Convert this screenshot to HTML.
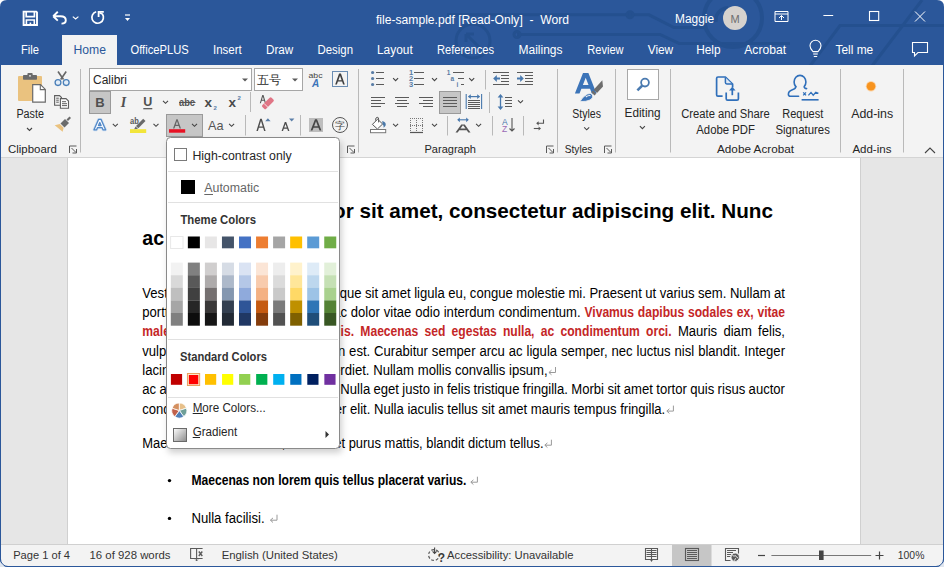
<!DOCTYPE html>
<html><head><meta charset="utf-8"><style>
html,body{margin:0;padding:0;width:944px;height:567px;overflow:hidden;background:#fff}
svg{display:block;font-family:"Liberation Sans", sans-serif}
</style></head><body>
<svg width="944" height="567" viewBox="0 0 944 567">
<rect x="0" y="0" width="944" height="567" fill="#ffffff" />
<path d="M0,7 Q0,0 7,0 L937,0 Q944,0 944,7 L944,66 L0,66 Z" fill="#2b579a" />
<g stroke="#24508f" stroke-width="3" fill="none">
<path d="M517,34.5 H660 L679,43.4 H790"/>
<path d="M447,14.8 H649 L674,27.5 H705"/>
<circle cx="630" cy="14.8" r="3"/>
<circle cx="517" cy="34.5" r="3"/>
<circle cx="473" cy="41" r="17"/>
<path d="M466,34 L480,48 M466,34 V42 M466,34 H474"/>
<circle cx="733" cy="18" r="29" stroke-width="4"/>
<path d="M716,22 A12,12 0 0 1 728,8" stroke-width="3.5"/>
<path d="M810,66 L840,25.5 L944,25.5"/>
<path d="M872,66 L922,0"/>
</g>
<text x="376" y="24" font-size="12" fill="#ffffff" textLength="193" lengthAdjust="spacingAndGlyphs" xml:space="preserve">file-sample.pdf [Read-Only]  -  Word</text>
<text x="675" y="23" font-size="12" fill="#ffffff" textLength="39" lengthAdjust="spacingAndGlyphs" >Maggie</text>
<circle cx="735" cy="18" r="12" fill="#d6d2ce"/>
<text x="735" y="22.5" font-size="11" fill="#6e6e6e" text-anchor="middle" >M</text>
<path d="M23.6,11.6 H36.2 L37,12.4 V25 H23.6 Z" fill="none" stroke="#ffffff" stroke-width="1.9" />
<path d="M26.2,11.6 V16.6 H34.4 V11.6" fill="none" stroke="#ffffff" stroke-width="1.7" />
<path d="M26.4,25 V20 H34.3 V25 M30.4,22.5 V25" fill="none" stroke="#ffffff" stroke-width="1.6" />
<path d="M53.2,16.2 L57.8,11.8 M53.2,16.2 L57.8,20.6 M53.2,16.2 H60.5 Q65.8,16.2 65.8,20.2 Q65.8,23.6 61.5,23.6" fill="none" stroke="#ffffff" stroke-width="1.9" />
<path d="M72.8,16.6 L75.6,19 L78.4,16.6" fill="none" stroke="#ffffff" stroke-width="1.2" />
<path d="M96.2,11.8 A5.8,5.8 0 1 0 102.4,14.1 L99.6,12.7" fill="none" stroke="#ffffff" stroke-width="1.7" />
<path d="M98.6,17 V11.8 H103.8" fill="none" stroke="#ffffff" stroke-width="1.8" />
<line x1="125" y1="15" x2="130" y2="15" stroke="#ffffff" stroke-width="1.2" />
<path d="M125,18 L130,18 L127.5,21 Z" fill="#ffffff" />
<path d="M775,11.5 H788 V21.5 H775 Z" fill="none" stroke="#ffffff" stroke-width="1" />
<line x1="775" y1="14" x2="788" y2="14" stroke="#ffffff" stroke-width="1" />
<path d="M781.5,20 V15.5 M779,18 L781.5,15.5 L784,18" fill="none" stroke="#ffffff" stroke-width="1" />
<line x1="823.4" y1="15.5" x2="833.2" y2="15.5" stroke="#ffffff" stroke-width="1" />
<rect x="869.5" y="11.5" width="9.2" height="9" fill="none" stroke="#ffffff" stroke-width="1.1" />
<path d="M915,11.5 L925,21.5 M925,11.5 L915,21.5" fill="none" stroke="#ffffff" stroke-width="1" />
<rect x="62" y="35" width="55" height="31" fill="#f3f3f3" />
<text x="21" y="54" font-size="12" fill="#ffffff" textLength="18" lengthAdjust="spacingAndGlyphs" >File</text>
<text x="73.5" y="54" font-size="12" fill="#2b579a" textLength="32.5" lengthAdjust="spacingAndGlyphs" >Home</text>
<text x="130.5" y="54" font-size="12" fill="#ffffff" textLength="58.3" lengthAdjust="spacingAndGlyphs" >OfficePLUS</text>
<text x="213" y="54" font-size="12" fill="#ffffff" textLength="28.7" lengthAdjust="spacingAndGlyphs" >Insert</text>
<text x="266" y="54" font-size="12" fill="#ffffff" textLength="27.2" lengthAdjust="spacingAndGlyphs" >Draw</text>
<text x="317.5" y="54" font-size="12" fill="#ffffff" textLength="35.5" lengthAdjust="spacingAndGlyphs" >Design</text>
<text x="377" y="54" font-size="12" fill="#ffffff" textLength="35.7" lengthAdjust="spacingAndGlyphs" >Layout</text>
<text x="437" y="54" font-size="12" fill="#ffffff" textLength="57" lengthAdjust="spacingAndGlyphs" >References</text>
<text x="518.5" y="54" font-size="12" fill="#ffffff" textLength="44" lengthAdjust="spacingAndGlyphs" >Mailings</text>
<text x="587.3" y="54" font-size="12" fill="#ffffff" textLength="36.3" lengthAdjust="spacingAndGlyphs" >Review</text>
<text x="647.7" y="54" font-size="12" fill="#ffffff" textLength="25.5" lengthAdjust="spacingAndGlyphs" >View</text>
<text x="696.2" y="54" font-size="12" fill="#ffffff" textLength="24.4" lengthAdjust="spacingAndGlyphs" >Help</text>
<text x="744.3" y="54" font-size="12" fill="#ffffff" textLength="41.7" lengthAdjust="spacingAndGlyphs" >Acrobat</text>
<text x="835.5" y="54" font-size="12" fill="#ffffff" textLength="37.7" lengthAdjust="spacingAndGlyphs" >Tell me</text>
<path d="M813,51.6 Q810,48.8 810,45.8 A5.5,5.5 0 0 1 821,45.8 Q821,48.8 818,51.6 Z" fill="none" stroke="#ffffff" stroke-width="1.1" />
<line x1="813.2" y1="54" x2="817.8" y2="54" stroke="#ffffff" stroke-width="1.1" />
<line x1="813.8" y1="56.5" x2="817.2" y2="56.5" stroke="#ffffff" stroke-width="1.1" />
<path d="M912.5,42.5 H927.5 V52.5 H918 L914.5,56 V52.5 H912.5 Z" fill="none" stroke="#ffffff" stroke-width="1.1" />
<rect x="0" y="65" width="944" height="92" fill="#f3f3f3" />
<line x1="0" y1="157.5" x2="944" y2="157.5" stroke="#d4d4d4" stroke-width="1" />
<line x1="0.5" y1="65" x2="0.5" y2="566" stroke="#2b579a" stroke-width="1" />
<line x1="943.5" y1="65" x2="943.5" y2="566" stroke="#2b579a" stroke-width="1" />
<text x="8" y="152.7" font-size="11" fill="#262626" textLength="49" lengthAdjust="spacingAndGlyphs" >Clipboard</text>
<text x="424.5" y="152.7" font-size="11" fill="#262626" textLength="51.5" lengthAdjust="spacingAndGlyphs" >Paragraph</text>
<text x="564.7" y="152.7" font-size="11" fill="#262626" textLength="27.7" lengthAdjust="spacingAndGlyphs" >Styles</text>
<text x="717" y="152.7" font-size="11" fill="#262626" textLength="77" lengthAdjust="spacingAndGlyphs" >Adobe Acrobat</text>
<text x="852.4" y="152.7" font-size="11" fill="#262626" textLength="39" lengthAdjust="spacingAndGlyphs" >Add-ins</text>
<line x1="80.5" y1="69" x2="80.5" y2="152.5" stroke="#b9b9b9" stroke-width="1" />
<line x1="358.5" y1="69" x2="358.5" y2="152.5" stroke="#b9b9b9" stroke-width="1" />
<line x1="557.5" y1="69" x2="557.5" y2="152.5" stroke="#b9b9b9" stroke-width="1" />
<line x1="615.5" y1="69" x2="615.5" y2="152.5" stroke="#b9b9b9" stroke-width="1" />
<line x1="670.5" y1="69" x2="670.5" y2="152.5" stroke="#b9b9b9" stroke-width="1" />
<line x1="840.5" y1="69" x2="840.5" y2="152.5" stroke="#b9b9b9" stroke-width="1" />
<line x1="903.5" y1="69" x2="903.5" y2="152.5" stroke="#b9b9b9" stroke-width="1" />
<path d="M69.5,153.0 V146.0 H76.5" fill="none" stroke="#5a5a5a" stroke-width="1" />
<path d="M71.5,148.0 L76,152.5 M76.5,149.0 V153.0 H72.5" fill="none" stroke="#5a5a5a" stroke-width="1" />
<path d="M347.5,153.0 V146.0 H354.5" fill="none" stroke="#5a5a5a" stroke-width="1" />
<path d="M349.5,148.0 L354,152.5 M354.5,149.0 V153.0 H350.5" fill="none" stroke="#5a5a5a" stroke-width="1" />
<path d="M546.5,153.0 V146.0 H553.5" fill="none" stroke="#5a5a5a" stroke-width="1" />
<path d="M548.5,148.0 L553,152.5 M553.5,149.0 V153.0 H549.5" fill="none" stroke="#5a5a5a" stroke-width="1" />
<path d="M604.5,153.0 V146.0 H611.5" fill="none" stroke="#5a5a5a" stroke-width="1" />
<path d="M606.5,148.0 L611,152.5 M611.5,149.0 V153.0 H607.5" fill="none" stroke="#5a5a5a" stroke-width="1" />
<rect x="18" y="76" width="24" height="25" fill="#eac27f" rx="1" />
<rect x="23" y="75" width="14" height="4.8" fill="#6b6b6b" rx="0.8" />
<rect x="27.4" y="73" width="5.3" height="3" fill="#6b6b6b" rx="1" />
<circle cx="30" cy="75.8" r="0.9" fill="#f3f3f3"/>
<path d="M32.7,84.6 H40.5 L45.3,89.4 V102.2 H32.7 Z" fill="#ffffff" stroke="#6a6a6a" stroke-width="1.2" />
<path d="M40.3,84.6 V89.6 H45.3" fill="none" stroke="#6a6a6a" stroke-width="1.1" />
<text x="16.4" y="117.5" font-size="12" fill="#262626" textLength="27.5" lengthAdjust="spacingAndGlyphs" >Paste</text>
<path d="M27,128 L29.5,130.5 L32,128" fill="none" stroke="#444" stroke-width="1.1" />
<path d="M58,71.5 L63.5,79.5 M66.2,71.5 L60.7,79.5" fill="none" stroke="#666" stroke-width="1.6" />
<circle cx="58" cy="82.6" r="2.9" fill="#e4eef8" stroke="#4a7fb8" stroke-width="1.3"/>
<circle cx="66.2" cy="82.6" r="2.9" fill="#e4eef8" stroke="#4a7fb8" stroke-width="1.3"/>
<path d="M54.6,95.6 H59.5 L61.5,97.6 V105.3 H54.6 Z" fill="#f3f3f3" stroke="#5f5f5f" stroke-width="1.1" />
<line x1="56.2" y1="98.2" x2="58.8" y2="98.2" stroke="#5f5f5f" stroke-width="1" />
<line x1="56.2" y1="100.2" x2="58.8" y2="100.2" stroke="#5f5f5f" stroke-width="1" />
<line x1="56.2" y1="102.2" x2="58.8" y2="102.2" stroke="#5f5f5f" stroke-width="1" />
<path d="M60.4,98.6 H66 L68.5,101.1 V108.2 H60.4 Z" fill="#fbfbfb" stroke="#5f5f5f" stroke-width="1.1" />
<line x1="62" y1="101.7" x2="66" y2="101.7" stroke="#5f5f5f" stroke-width="1" />
<line x1="62" y1="103.7" x2="67" y2="103.7" stroke="#5f5f5f" stroke-width="1" />
<line x1="62" y1="105.6" x2="67" y2="105.6" stroke="#5f5f5f" stroke-width="1" />
<path d="M60.5,123.5 L65,119 L69,123 L64.5,127.5 Z" fill="#6b6b6b" />
<path d="M66.5,119.5 L69.5,116.5 L71,118 L68,121 Z" fill="#6b6b6b" />
<path d="M54.7,125.2 L59.8,124 L63.6,127.8 L62.6,131.8 Z" fill="#eac27f" />
<rect x="89.5" y="68.5" width="162" height="22" fill="#ffffff" stroke="#a6a6a6" stroke-width="1" />
<text x="93" y="83.5" font-size="12" fill="#262626" textLength="34" lengthAdjust="spacingAndGlyphs" >Calibri</text>
<path d="M242,78.5 H248 L245,81.5 Z" fill="#5a5a5a" />
<rect x="254.5" y="68.5" width="48" height="22" fill="#ffffff" stroke="#a6a6a6" stroke-width="1" />
<text x="257" y="84" font-size="12" fill="#262626" textLength="24" lengthAdjust="spacingAndGlyphs" >五号</text>
<path d="M292,78.5 H298 L295,81.5 Z" fill="#5a5a5a" />
<text x="308.5" y="78" font-size="8" fill="#444" textLength="14" lengthAdjust="spacingAndGlyphs" >abc</text>
<text x="312" y="87" font-size="10" fill="#3b73b9" font-weight="bold" font-style="italic">A</text>
<rect x="332.5" y="71.5" width="15" height="15" fill="none" stroke="#6b8db3" stroke-width="1" />
<path d="M339.05,73.6 L340.95,73.6 L344.8,84.4 L343.10,84.4 L342.09,81.56 L337.91,81.56 L336.90,84.4 L335.2,84.4 Z M338.40,80.20 L341.60,80.20 L340.00,75.70 Z" fill="#3f3f3f" fill-rule="evenodd"/>
<rect x="89.5" y="91.5" width="21" height="22" fill="#c6c6c6" stroke="#9a9a9a" stroke-width="1" />
<text x="100" y="107" font-size="13" fill="#505050" font-weight="bold" text-anchor="middle" >B</text>
<text x="123.5" y="107" font-size="14" fill="#505050" font-weight="bold" text-anchor="middle" font-style="italic" font-family="Liberation Serif">I</text>
<text x="147.7" y="106" font-size="12.5" fill="#505050" font-weight="bold" text-anchor="middle" >U</text>
<line x1="143.3" y1="108.7" x2="152.3" y2="108.7" stroke="#505050" stroke-width="1.2" />
<path d="M163.0,100.8 L165.5,103.3 L168.0,100.8" fill="none" stroke="#444" stroke-width="1.1" />
<text x="179" y="105.5" font-size="11" fill="#555" textLength="16" lengthAdjust="spacingAndGlyphs" font-weight="bold" >abc</text>
<line x1="179" y1="102.5" x2="195.5" y2="102.5" stroke="#555" stroke-width="1" />
<text x="204.6" y="107" font-size="13.5" fill="#4a4a4a" font-weight="bold" >x</text>
<text x="213.4" y="109.8" font-size="6" fill="#5a7ea8" font-weight="bold" >2</text>
<text x="228.6" y="107" font-size="13.5" fill="#4a4a4a" font-weight="bold" >x</text>
<text x="237.4" y="100.2" font-size="6" fill="#5a7ea8" font-weight="bold" >2</text>
<line x1="250.5" y1="92" x2="250.5" y2="112" stroke="#b9b9b9" stroke-width="1" />
<path d="M262.30,95 L263.50,95 L266,103.2 L264.90,103.2 L264.13,100.68 L261.67,100.68 L260.90,103.2 L259.8,103.2 Z M261.94,99.80 L263.86,99.80 L262.90,96.64 Z" fill="#555555" fill-rule="evenodd"/>
<path d="M262.4,105 L269.6,97.8 Q270.6,96.8 271.6,97.8 L273.4,99.6 Q274.4,100.6 273.4,101.6 L266.2,108.8 Q265.2,109.8 264.2,108.8 L262.4,107 Q261.4,106 262.4,105 Z" fill="#e07585" />
<path d="M264,103.4 L268.2,107.6" fill="none" stroke="#f3f3f3" stroke-width="0.9" />
<path d="M98.63,119.3 L100.97,119.3 L105.6,129.8 L103.00,129.8 L102.02,127.58 L97.58,127.58 L96.60,129.8 L94,129.8 Z M98.50,125.50 L101.10,125.50 L99.80,122.54 Z" fill="none" stroke="#cfe0f3" stroke-width="2.8" stroke-linejoin="round"/>
<path d="M98.63,119.3 L100.97,119.3 L105.6,129.8 L103.00,129.8 L102.02,127.58 L97.58,127.58 L96.60,129.8 L94,129.8 Z M98.50,125.50 L101.10,125.50 L99.80,122.54 Z" fill="#f7faff" stroke="#5288c6" stroke-width="1.3" fill-rule="evenodd" stroke-linejoin="round"/>
<path d="M112.8,123.8 L115.3,126.3 L117.8,123.8" fill="none" stroke="#444" stroke-width="1.1" />
<text x="130" y="124.3" font-size="8.5" fill="#5a5a5a" textLength="8.8" lengthAdjust="spacingAndGlyphs" font-weight="bold" >ab</text>
<path d="M136,126 L143.2,118.8 L145.5,121.1 L138.3,128.3 Z" fill="#6a6a6a" />
<path d="M135.6,126.4 L138,128.8 L134,129.5 Z" fill="#6a6a6a" />
<rect x="130" y="129.2" width="16.2" height="3.8" fill="#f2e53a" />
<path d="M153.5,123.8 L156,126.3 L158.5,123.8" fill="none" stroke="#444" stroke-width="1.1" />
<rect x="166.5" y="114.5" width="36" height="22" fill="#c6c6c6" stroke="#9a9a9a" stroke-width="1" />
<path d="M176.37,119.2 L177.63,119.2 L181,128.5 L179.60,128.5 L178.67,125.92 L175.33,125.92 L174.40,128.5 L173,128.5 Z M175.74,124.80 L178.26,124.80 L177.00,121.32 Z" fill="#666666" fill-rule="evenodd"/>
<rect x="169" y="129.2" width="16.2" height="3.5" fill="#e81123" />
<path d="M192.0,123.8 L194.5,126.3 L197.0,123.8" fill="none" stroke="#444" stroke-width="1.1" />
<text x="208" y="130" font-size="13" fill="#555" textLength="15.5" lengthAdjust="spacingAndGlyphs" >Aa</text>
<path d="M229.1,123.8 L231.6,126.3 L234.1,123.8" fill="none" stroke="#444" stroke-width="1.1" />
<line x1="245.5" y1="115" x2="245.5" y2="135.5" stroke="#b9b9b9" stroke-width="1" />
<path d="M260.20,118.8 L261.80,118.8 L265.6,131 L264.10,131 L263.10,127.80 L258.90,127.80 L257.90,131 L256.4,131 Z M259.27,126.60 L262.73,126.60 L261.00,121.05 Z" fill="#4d4d4d" fill-rule="evenodd"/>
<path d="M265.2,121.2 L267.9,118.2 L270.6,121.2 Z" fill="#5a7ea8" />
<path d="M284.80,122 L286.20,122 L289.4,131 L288.00,131 L287.19,128.72 L283.81,128.72 L283.00,131 L281.6,131 Z M284.21,127.60 L286.79,127.60 L285.50,123.97 Z" fill="#4d4d4d" fill-rule="evenodd"/>
<path d="M289,118.4 L294.4,118.4 L291.7,121.4 Z" fill="#5a7ea8" />
<line x1="300.5" y1="115" x2="300.5" y2="135.5" stroke="#b9b9b9" stroke-width="1" />
<rect x="309" y="118" width="14" height="14" fill="#bdbdbd" />
<path d="M315.00,119.2 L317.00,119.2 L321.4,130.6 L319.60,130.6 L318.46,127.64 L313.54,127.64 L312.40,130.6 L310.6,130.6 Z M314.10,126.20 L317.90,126.20 L316.00,121.27 Z" fill="#454545" fill-rule="evenodd"/>
<circle cx="340" cy="125" r="7.5" fill="none" stroke="#555" stroke-width="1"/>
<text x="340" y="129" font-size="10" fill="#444" text-anchor="middle" >字</text>
<circle cx="372.6" cy="72.5" r="1.6" fill="#587ca5"/>
<line x1="376" y1="72.5" x2="384" y2="72.5" stroke="#5a5a5a" stroke-width="1" />
<circle cx="372.6" cy="78.5" r="1.6" fill="#587ca5"/>
<line x1="376" y1="78.5" x2="384" y2="78.5" stroke="#5a5a5a" stroke-width="1" />
<circle cx="372.6" cy="84.5" r="1.6" fill="#587ca5"/>
<line x1="376" y1="84.5" x2="384" y2="84.5" stroke="#5a5a5a" stroke-width="1" />
<path d="M393.1,78.1 L395.6,80.6 L398.1,78.1" fill="none" stroke="#444" stroke-width="1.1" />
<text x="411" y="75.3" font-size="7.5" fill="#587ca5" font-weight="bold" text-anchor="middle" >1</text>
<line x1="414" y1="72.5" x2="424" y2="72.5" stroke="#5a5a5a" stroke-width="1" />
<text x="411" y="81.3" font-size="7.5" fill="#587ca5" font-weight="bold" text-anchor="middle" >2</text>
<line x1="414" y1="78.5" x2="424" y2="78.5" stroke="#5a5a5a" stroke-width="1" />
<text x="411" y="87.3" font-size="7.5" fill="#587ca5" font-weight="bold" text-anchor="middle" >3</text>
<line x1="414" y1="84.5" x2="424" y2="84.5" stroke="#5a5a5a" stroke-width="1" />
<path d="M432.0,78.1 L434.5,80.6 L437.0,78.1" fill="none" stroke="#444" stroke-width="1.1" />
<text x="448.5" y="75.2" font-size="6.5" fill="#587ca5" font-weight="bold" text-anchor="middle" >1</text>
<line x1="453" y1="72.5" x2="464" y2="72.5" stroke="#5a5a5a" stroke-width="1" />
<text x="452.3" y="81.2" font-size="6.5" fill="#587ca5" font-weight="bold" text-anchor="middle" >a</text>
<line x1="458" y1="78.5" x2="464" y2="78.5" stroke="#5a5a5a" stroke-width="1" />
<text x="457.5" y="87.2" font-size="6.5" fill="#587ca5" font-weight="bold" text-anchor="middle" >i</text>
<line x1="461" y1="84.5" x2="464" y2="84.5" stroke="#5a5a5a" stroke-width="1" />
<path d="M469.2,78.1 L471.7,80.6 L474.2,78.1" fill="none" stroke="#444" stroke-width="1.1" />
<line x1="485.5" y1="70" x2="485.5" y2="89.5" stroke="#b9b9b9" stroke-width="1" />
<line x1="493" y1="72.5" x2="509" y2="72.5" stroke="#5a5a5a" stroke-width="1" />
<line x1="501" y1="75.5" x2="509" y2="75.5" stroke="#5a5a5a" stroke-width="1" />
<line x1="501" y1="78.5" x2="509" y2="78.5" stroke="#5a5a5a" stroke-width="1" />
<line x1="501" y1="81.5" x2="509" y2="81.5" stroke="#5a5a5a" stroke-width="1" />
<line x1="493" y1="84.5" x2="509" y2="84.5" stroke="#5a5a5a" stroke-width="1" />
<path d="M500,78.5 H495.5" fill="none" stroke="#4878ad" stroke-width="2" />
<path d="M493.2,78.5 L496.8,75 V82 Z" fill="#4878ad" />
<line x1="517" y1="72.5" x2="533" y2="72.5" stroke="#5a5a5a" stroke-width="1" />
<line x1="525" y1="75.5" x2="533" y2="75.5" stroke="#5a5a5a" stroke-width="1" />
<line x1="525" y1="78.5" x2="533" y2="78.5" stroke="#5a5a5a" stroke-width="1" />
<line x1="525" y1="81.5" x2="533" y2="81.5" stroke="#5a5a5a" stroke-width="1" />
<line x1="517" y1="84.5" x2="533" y2="84.5" stroke="#5a5a5a" stroke-width="1" />
<path d="M517,78.5 H521.5" fill="none" stroke="#4878ad" stroke-width="2" />
<path d="M523.8,78.5 L520.2,75 V82 Z" fill="#4878ad" />
<line x1="371" y1="97.5" x2="385" y2="97.5" stroke="#5a5a5a" stroke-width="1" />
<line x1="371" y1="100.5" x2="381" y2="100.5" stroke="#5a5a5a" stroke-width="1" />
<line x1="371" y1="103.5" x2="385" y2="103.5" stroke="#5a5a5a" stroke-width="1" />
<line x1="371" y1="106.5" x2="381" y2="106.5" stroke="#5a5a5a" stroke-width="1" />
<line x1="395" y1="97.5" x2="409" y2="97.5" stroke="#5a5a5a" stroke-width="1" />
<line x1="397" y1="100.5" x2="407" y2="100.5" stroke="#5a5a5a" stroke-width="1" />
<line x1="395" y1="103.5" x2="409" y2="103.5" stroke="#5a5a5a" stroke-width="1" />
<line x1="397" y1="106.5" x2="407" y2="106.5" stroke="#5a5a5a" stroke-width="1" />
<line x1="419" y1="97.5" x2="433" y2="97.5" stroke="#5a5a5a" stroke-width="1" />
<line x1="423" y1="100.5" x2="433" y2="100.5" stroke="#5a5a5a" stroke-width="1" />
<line x1="419" y1="103.5" x2="433" y2="103.5" stroke="#5a5a5a" stroke-width="1" />
<line x1="423" y1="106.5" x2="433" y2="106.5" stroke="#5a5a5a" stroke-width="1" />
<rect x="439.5" y="91.5" width="21" height="22" fill="#c6c6c6" stroke="#9a9a9a" stroke-width="1" />
<line x1="443" y1="97.5" x2="457" y2="97.5" stroke="#5a5a5a" stroke-width="1" />
<line x1="443" y1="100.5" x2="457" y2="100.5" stroke="#5a5a5a" stroke-width="1" />
<line x1="443" y1="103.5" x2="457" y2="103.5" stroke="#5a5a5a" stroke-width="1" />
<line x1="443" y1="106.5" x2="457" y2="106.5" stroke="#5a5a5a" stroke-width="1" />
<line x1="466.2" y1="94" x2="466.2" y2="109" stroke="#4878ad" stroke-width="1.1" />
<line x1="481.6" y1="94" x2="481.6" y2="109" stroke="#4878ad" stroke-width="1.1" />
<path d="M468.5,96.6 H479.5" fill="none" stroke="#4878ad" stroke-width="1.2" />
<path d="M468,96.6 L470.8,94.2 V99 Z M480,96.6 L477.2,94.2 V99 Z" fill="#4878ad" />
<line x1="468" y1="100.5" x2="480" y2="100.5" stroke="#5a5a5a" stroke-width="1" />
<line x1="468" y1="102.5" x2="480" y2="102.5" stroke="#5a5a5a" stroke-width="1" />
<line x1="468" y1="104.5" x2="480" y2="104.5" stroke="#5a5a5a" stroke-width="1" />
<line x1="468" y1="106.5" x2="480" y2="106.5" stroke="#5a5a5a" stroke-width="1" />
<line x1="468" y1="108.5" x2="480" y2="108.5" stroke="#5a5a5a" stroke-width="1" />
<line x1="489.5" y1="92" x2="489.5" y2="113" stroke="#b9b9b9" stroke-width="1" />
<path d="M500.5,96 V108" fill="none" stroke="#4878ad" stroke-width="1.3" />
<path d="M500.5,94 L497.6,97.4 H503.4 Z M500.5,110 L497.6,106.6 H503.4 Z" fill="#4878ad" />
<line x1="505" y1="97.5" x2="512" y2="97.5" stroke="#5a5a5a" stroke-width="1" />
<line x1="505" y1="100.5" x2="512" y2="100.5" stroke="#5a5a5a" stroke-width="1" />
<line x1="505" y1="103.5" x2="512" y2="103.5" stroke="#5a5a5a" stroke-width="1" />
<line x1="505" y1="106.5" x2="512" y2="106.5" stroke="#5a5a5a" stroke-width="1" />
<path d="M518.0,100.3 L520.5,102.8 L523.0,100.3" fill="none" stroke="#444" stroke-width="1.1" />
<path d="M372.4,124.4 L377.6,119.2 L382.6,124 L377.4,129 Z" fill="#ffffff" stroke="#555" stroke-width="1" />
<path d="M375.6,120.6 Q375.4,117.3 377.2,117.3 Q378.8,117.3 378.6,119.2 V122.4" fill="none" stroke="#555" stroke-width="1" />
<path d="M382.2,121 Q386.6,122.4 385.6,125.6 Q384.8,127.2 383.6,127.8 Q384,125.5 382.6,124.2 Z" fill="#4a78a8" />
<rect x="370.5" y="129.5" width="15.2" height="3.2" fill="#ffffff" stroke="#777" stroke-width="1" />
<path d="M393.1,123.8 L395.6,126.3 L398.1,123.8" fill="none" stroke="#444" stroke-width="1.1" />
<g fill="#777">
<rect x="410" y="118" width="1" height="1"/><rect x="416" y="118" width="1" height="1"/><rect x="422" y="118" width="1" height="1"/>
<rect x="410" y="120" width="1" height="1"/><rect x="416" y="120" width="1" height="1"/><rect x="422" y="120" width="1" height="1"/>
<rect x="410" y="122" width="1" height="1"/><rect x="416" y="122" width="1" height="1"/><rect x="422" y="122" width="1" height="1"/>
<rect x="410" y="124" width="1" height="1"/><rect x="416" y="124" width="1" height="1"/><rect x="422" y="124" width="1" height="1"/>
<rect x="410" y="126" width="1" height="1"/><rect x="416" y="126" width="1" height="1"/><rect x="422" y="126" width="1" height="1"/>
<rect x="410" y="128" width="1" height="1"/><rect x="416" y="128" width="1" height="1"/><rect x="422" y="128" width="1" height="1"/>
<rect x="410" y="130" width="1" height="1"/><rect x="416" y="130" width="1" height="1"/><rect x="422" y="130" width="1" height="1"/>
<rect x="410" y="132" width="1" height="1"/><rect x="416" y="132" width="1" height="1"/><rect x="422" y="132" width="1" height="1"/>
<rect x="410" y="118" width="1" height="1"/><rect x="410" y="125" width="1" height="1"/>
<rect x="412" y="118" width="1" height="1"/><rect x="412" y="125" width="1" height="1"/>
<rect x="414" y="118" width="1" height="1"/><rect x="414" y="125" width="1" height="1"/>
<rect x="416" y="118" width="1" height="1"/><rect x="416" y="125" width="1" height="1"/>
<rect x="418" y="118" width="1" height="1"/><rect x="418" y="125" width="1" height="1"/>
<rect x="420" y="118" width="1" height="1"/><rect x="420" y="125" width="1" height="1"/>
<rect x="422" y="118" width="1" height="1"/><rect x="422" y="125" width="1" height="1"/>
</g>
<line x1="410" y1="132.5" x2="423" y2="132.5" stroke="#555" stroke-width="1.2" />
<path d="M432.0,123.8 L434.5,126.3 L437.0,123.8" fill="none" stroke="#444" stroke-width="1.1" />
<line x1="447.5" y1="116" x2="447.5" y2="135.5" stroke="#b9b9b9" stroke-width="1" />
<path d="M458.5,119.8 H467.5" fill="none" stroke="#4878ad" stroke-width="1.1" />
<path d="M457.2,119.8 L459.8,117.4 V122.2 Z M468.8,119.8 L466.2,117.4 V122.2 Z" fill="#4878ad" />
<path d="M461.25,124.5 L464.75,124.5 L470.5,132.5 L468.30,132.5 L466.76,130.36 L459.24,130.36 L457.70,132.5 L455.5,132.5 Z M460.50,128.60 L465.50,128.60 L463.00,125.13 Z" fill="#555555" fill-rule="evenodd"/>
<path d="M476.1,123.8 L478.6,126.3 L481.1,123.8" fill="none" stroke="#444" stroke-width="1.1" />
<line x1="492.5" y1="116" x2="492.5" y2="135.5" stroke="#b9b9b9" stroke-width="1" />
<text x="502" y="124.5" font-size="8.5" fill="#4878ad" >A</text>
<text x="502" y="132" font-size="8.5" fill="#9b6ab5" >Z</text>
<path d="M512,118 V131 M509.5,128.5 L512,131 L514.5,128.5" fill="none" stroke="#555" stroke-width="1.1" />
<line x1="523.5" y1="116" x2="523.5" y2="135.5" stroke="#b9b9b9" stroke-width="1" />
<path d="M543.5,119.5 V123.3 H537.5" fill="none" stroke="#555" stroke-width="1.1" />
<path d="M536.2,123.3 L538.6,121.2 V125.4 Z" fill="#555" />
<path d="M533.8,128.5 H539.5" fill="none" stroke="#555" stroke-width="1.1" />
<path d="M541,128.5 L538.6,126.4 V130.6 Z" fill="#555" />
<path d="M583.00,73 L588.40,73 L596.5,93.5 L591.90,93.5 L590.00,88.68 L581.40,88.68 L579.50,93.5 L574.9,93.5 Z M582.86,85.00 L588.54,85.00 L585.70,77.81 Z" fill="#3c74b8" fill-rule="evenodd"/>
<path d="M602.3,80.2 L603,86.5 L597,93 L593.7,89.7 Z" fill="#6d6d6d" />
<path d="M593,90.5 L596.2,93.7 L594.5,95.4 L591.3,92.2 Z" fill="#6d6d6d" />
<path d="M580,101.6 Q582.5,96.5 587.5,94 Q591,92.5 592.5,95 Q593.5,98 590,100 Q586,101.8 580,101.6 Z" fill="#3c74b8" stroke="#f3f3f3" stroke-width="0.8" />
<path d="M585.8,97 Q588.5,95 590.5,95.7" fill="none" stroke="#f3f3f3" stroke-width="1.1" />
<text x="572.3" y="118" font-size="12" fill="#262626" textLength="28.7" lengthAdjust="spacingAndGlyphs" >Styles</text>
<path d="M584.2,127.3 L586.7,129.8 L589.2,127.3" fill="none" stroke="#444" stroke-width="1.1" />
<rect x="627.5" y="69.5" width="31" height="30" fill="#ffffff" stroke="#a8a8a8" stroke-width="1" />
<circle cx="645" cy="82.6" r="3.9" fill="none" stroke="#4a7ab0" stroke-width="1.8"/>
<line x1="642.2" y1="85.6" x2="637.4" y2="90.4" stroke="#4a7ab0" stroke-width="2.6" />
<text x="624.6" y="116.5" font-size="12" fill="#262626" textLength="36" lengthAdjust="spacingAndGlyphs" >Editing</text>
<path d="M639.9,126.1 L642.4,128.6 L644.9,126.1" fill="none" stroke="#444" stroke-width="1.1" />
<path d="M722.6,96.2 H718 Q716.6,96.2 716.6,94.8 V78.4 Q716.6,77 718,77 H725.4 L732.6,84 V87.5" fill="none" stroke="#2f6fba" stroke-width="1.7" stroke-linejoin="round"/>
<path d="M725.4,77.6 V82.6 Q725.4,84 726.8,84 H732" fill="#dfe9f5" stroke="#2f6fba" stroke-width="1.5" />
<path d="M726.2,92.6 V98.8 Q726.2,100.2 727.6,100.2 H737 Q738.4,100.2 738.4,98.8 V92.6" fill="none" stroke="#2f6fba" stroke-width="1.7" />
<path d="M732.3,95.2 V89.5" fill="none" stroke="#2f6fba" stroke-width="1.7" />
<path d="M732.3,86.8 L735.6,90.6 H729 Z" fill="#2f6fba" />
<text x="681.2" y="118" font-size="12" fill="#262626" textLength="88.6" lengthAdjust="spacingAndGlyphs" >Create and Share</text>
<text x="696.3" y="134" font-size="12" fill="#262626" textLength="58.7" lengthAdjust="spacingAndGlyphs" >Adobe PDF</text>
<path d="M795.8,86.6 A5.9,6.6 0 1 1 804.2,86.6 Q804.2,88.6 806.6,88.6" fill="none" stroke="#2f6fba" stroke-width="1.6" stroke-linecap="round"/>
<path d="M795.8,86.6 Q795.8,88.8 792.4,89.8 Q788.4,91.2 788.4,94.2 Q788.4,96.2 790.4,96.2 H798.6" fill="none" stroke="#2f6fba" stroke-width="1.6" stroke-linecap="round"/>
<path d="M803.2,92.4 L806,95.4 M806,92.4 L803.2,95.4" fill="none" stroke="#2f6fba" stroke-width="1.3" />
<path d="M808.4,95.4 L811,92.4 L813.2,95.2 L815.8,92.2 L818.4,93.4" fill="none" stroke="#2f6fba" stroke-width="1.3" />
<line x1="801.6" y1="99.8" x2="818.6" y2="99.8" stroke="#2f6fba" stroke-width="1.6" />
<text x="782.3" y="118" font-size="12" fill="#262626" textLength="41" lengthAdjust="spacingAndGlyphs" >Request</text>
<text x="775.4" y="134" font-size="12" fill="#262626" textLength="54.5" lengthAdjust="spacingAndGlyphs" >Signatures</text>
<circle cx="871" cy="86.2" r="5.2" fill="#fbd3a6"/><circle cx="871" cy="86.2" r="4.3" fill="#f7931e"/>
<text x="851.2" y="118" font-size="12" fill="#262626" textLength="42" lengthAdjust="spacingAndGlyphs" >Add-ins</text>
<path d="M925,153 L930,148 L935,153" fill="none" stroke="#444" stroke-width="1.1" />
<rect x="1" y="158" width="942" height="386" fill="#e6e6e6" />
<rect x="68" y="158" width="792" height="386" fill="#ffffff" />
<line x1="67.5" y1="158" x2="67.5" y2="544" stroke="#d0d0d0" stroke-width="1" />
<line x1="860.5" y1="158" x2="860.5" y2="544" stroke="#d0d0d0" stroke-width="1" />
<text x="333" y="217.6" font-size="20.5" fill="#000000" textLength="440" lengthAdjust="spacingAndGlyphs" font-weight="bold" >or sit amet, consectetur adipiscing elit. Nunc</text>
<text x="142.3" y="245" font-size="20.5" fill="#000000" textLength="160" lengthAdjust="spacingAndGlyphs" font-weight="bold" >ac faucibus odio.</text>
<text x="142.3" y="297.7" font-size="14" fill="#000000" textLength="64.03" lengthAdjust="spacingAndGlyphs" >Vestibulum</text>
<text x="209.8" y="297.7" font-size="14" fill="#000000" textLength="36.4" lengthAdjust="spacingAndGlyphs" >neque</text>
<text x="249.67" y="297.7" font-size="14" fill="#000000" textLength="42.19" lengthAdjust="spacingAndGlyphs" >massa,</text>
<text x="295.34" y="297.7" font-size="14" fill="#000000" textLength="66.21" lengthAdjust="spacingAndGlyphs" >scelerisque</text>
<text x="365.02" y="297.7" font-size="14" fill="#000000" textLength="13.09" lengthAdjust="spacingAndGlyphs" >sit</text>
<text x="381.58" y="297.7" font-size="14" fill="#000000" textLength="29.1" lengthAdjust="spacingAndGlyphs" >amet</text>
<text x="414.15" y="297.7" font-size="14" fill="#000000" textLength="30.56" lengthAdjust="spacingAndGlyphs" >ligula</text>
<text x="448.19" y="297.7" font-size="14" fill="#000000" textLength="18.2" lengthAdjust="spacingAndGlyphs" >eu,</text>
<text x="469.85" y="297.7" font-size="14" fill="#000000" textLength="42.95" lengthAdjust="spacingAndGlyphs" >congue</text>
<text x="516.27" y="297.7" font-size="14" fill="#000000" textLength="48.74" lengthAdjust="spacingAndGlyphs" >molestie</text>
<text x="568.48" y="297.7" font-size="14" fill="#000000" textLength="17.45" lengthAdjust="spacingAndGlyphs" >mi.</text>
<text x="589.4" y="297.7" font-size="14" fill="#000000" textLength="52.39" lengthAdjust="spacingAndGlyphs" >Praesent</text>
<text x="645.27" y="297.7" font-size="14" fill="#000000" textLength="10.92" lengthAdjust="spacingAndGlyphs" >ut</text>
<text x="659.65" y="297.7" font-size="14" fill="#000000" textLength="34.92" lengthAdjust="spacingAndGlyphs" >varius</text>
<text x="698.04" y="297.7" font-size="14" fill="#000000" textLength="28.37" lengthAdjust="spacingAndGlyphs" >sem.</text>
<text x="729.88" y="297.7" font-size="14" fill="#000000" textLength="40.73" lengthAdjust="spacingAndGlyphs" >Nullam</text>
<text x="774.08" y="297.7" font-size="14" fill="#000000" textLength="10.92" lengthAdjust="spacingAndGlyphs" >at</text>
<text x="142.3" y="317.0" font-size="14" fill="#000000" textLength="44.38" lengthAdjust="spacingAndGlyphs" >porttitor</text>
<text x="190.48" y="317.0" font-size="14" fill="#000000" textLength="29.1" lengthAdjust="spacingAndGlyphs" >arcu,</text>
<text x="223.38" y="317.0" font-size="14" fill="#000000" textLength="21.11" lengthAdjust="spacingAndGlyphs" >nec</text>
<text x="248.29" y="317.0" font-size="14" fill="#000000" textLength="37.11" lengthAdjust="spacingAndGlyphs" >lacinia</text>
<text x="289.2" y="317.0" font-size="14" fill="#000000" textLength="23.28" lengthAdjust="spacingAndGlyphs" >nisi.</text>
<text x="316.28" y="317.0" font-size="14" fill="#000000" textLength="13.09" lengthAdjust="spacingAndGlyphs" >Ut</text>
<text x="333.17" y="317.0" font-size="14" fill="#000000" textLength="13.83" lengthAdjust="spacingAndGlyphs" >ac</text>
<text x="350.8" y="317.0" font-size="14" fill="#000000" textLength="29.11" lengthAdjust="spacingAndGlyphs" >dolor</text>
<text x="383.71" y="317.0" font-size="14" fill="#000000" textLength="27.65" lengthAdjust="spacingAndGlyphs" >vitae</text>
<text x="415.16" y="317.0" font-size="14" fill="#000000" textLength="24.75" lengthAdjust="spacingAndGlyphs" >odio</text>
<text x="443.71" y="317.0" font-size="14" fill="#000000" textLength="50.93" lengthAdjust="spacingAndGlyphs" >interdum</text>
<text x="498.44" y="317.0" font-size="14" fill="#000000" textLength="82.22" lengthAdjust="spacingAndGlyphs" >condimentum.</text>
<text x="584.46" y="317.0" font-size="14" fill="#c42626" textLength="49.54" lengthAdjust="spacingAndGlyphs" font-weight="bold" >Vivamus</text>
<text x="637.79" y="317.0" font-size="14" fill="#c42626" textLength="46.37" lengthAdjust="spacingAndGlyphs" font-weight="bold" >dapibus</text>
<text x="687.96" y="317.0" font-size="14" fill="#c42626" textLength="45.05" lengthAdjust="spacingAndGlyphs" font-weight="bold" >sodales</text>
<text x="736.81" y="317.0" font-size="14" fill="#c42626" textLength="16.82" lengthAdjust="spacingAndGlyphs" font-weight="bold" >ex,</text>
<text x="757.43" y="317.0" font-size="14" fill="#c42626" textLength="27.57" lengthAdjust="spacingAndGlyphs" font-weight="bold" >vitae</text>
<text x="142.3" y="336.3" font-size="14" fill="#c42626" textLength="62.53" lengthAdjust="spacingAndGlyphs" font-weight="bold" >malesuada</text>
<text x="211.11" y="336.3" font-size="14" fill="#c42626" textLength="35.62" lengthAdjust="spacingAndGlyphs" font-weight="bold" >ipsum</text>
<text x="253.0" y="336.3" font-size="14" fill="#c42626" textLength="39.67" lengthAdjust="spacingAndGlyphs" font-weight="bold" >cursus</text>
<text x="298.94" y="336.3" font-size="14" fill="#c42626" textLength="55.13" lengthAdjust="spacingAndGlyphs" font-weight="bold" >convallis.</text>
<text x="360.35" y="336.3" font-size="14" fill="#c42626" textLength="57.83" lengthAdjust="spacingAndGlyphs" font-weight="bold" >Maecenas</text>
<text x="424.45" y="336.3" font-size="14" fill="#c42626" textLength="20.84" lengthAdjust="spacingAndGlyphs" font-weight="bold" >sed</text>
<text x="451.57" y="336.3" font-size="14" fill="#c42626" textLength="45.05" lengthAdjust="spacingAndGlyphs" font-weight="bold" >egestas</text>
<text x="502.9" y="336.3" font-size="14" fill="#c42626" textLength="31.59" lengthAdjust="spacingAndGlyphs" font-weight="bold" >nulla,</text>
<text x="540.76" y="336.3" font-size="14" fill="#c42626" textLength="13.45" lengthAdjust="spacingAndGlyphs" font-weight="bold" >ac</text>
<text x="560.49" y="336.3" font-size="14" fill="#c42626" textLength="79.3" lengthAdjust="spacingAndGlyphs" font-weight="bold" >condimentum</text>
<text x="646.06" y="336.3" font-size="14" fill="#c42626" textLength="25.54" lengthAdjust="spacingAndGlyphs" font-weight="bold" >orci.</text>
<text x="677.88" y="336.3" font-size="14" fill="#000000" textLength="39.28" lengthAdjust="spacingAndGlyphs" >Mauris</text>
<text x="723.44" y="336.3" font-size="14" fill="#000000" textLength="28.37" lengthAdjust="spacingAndGlyphs" >diam</text>
<text x="758.08" y="336.3" font-size="14" fill="#000000" textLength="26.92" lengthAdjust="spacingAndGlyphs" >felis,</text>
<text x="142.3" y="355.6" font-size="14" fill="#000000" textLength="53.13" lengthAdjust="spacingAndGlyphs" >vulputate</text>
<text x="199.33" y="355.6" font-size="14" fill="#000000" textLength="13.83" lengthAdjust="spacingAndGlyphs" >ac</text>
<text x="217.07" y="355.6" font-size="14" fill="#000000" textLength="43.65" lengthAdjust="spacingAndGlyphs" >suscipit</text>
<text x="264.62" y="355.6" font-size="14" fill="#000000" textLength="14.55" lengthAdjust="spacingAndGlyphs" >et,</text>
<text x="283.08" y="355.6" font-size="14" fill="#000000" textLength="36.37" lengthAdjust="spacingAndGlyphs" >iaculis</text>
<text x="323.37" y="355.6" font-size="14" fill="#000000" textLength="21.84" lengthAdjust="spacingAndGlyphs" >non</text>
<text x="349.11" y="355.6" font-size="14" fill="#000000" textLength="21.1" lengthAdjust="spacingAndGlyphs" >est.</text>
<text x="374.12" y="355.6" font-size="14" fill="#000000" textLength="53.84" lengthAdjust="spacingAndGlyphs" >Curabitur</text>
<text x="431.86" y="355.6" font-size="14" fill="#000000" textLength="43.65" lengthAdjust="spacingAndGlyphs" >semper</text>
<text x="479.42" y="355.6" font-size="14" fill="#000000" textLength="25.46" lengthAdjust="spacingAndGlyphs" >arcu</text>
<text x="508.79" y="355.6" font-size="14" fill="#000000" textLength="13.83" lengthAdjust="spacingAndGlyphs" >ac</text>
<text x="526.52" y="355.6" font-size="14" fill="#000000" textLength="30.56" lengthAdjust="spacingAndGlyphs" >ligula</text>
<text x="561.0" y="355.6" font-size="14" fill="#000000" textLength="46.56" lengthAdjust="spacingAndGlyphs" >semper,</text>
<text x="611.47" y="355.6" font-size="14" fill="#000000" textLength="21.11" lengthAdjust="spacingAndGlyphs" >nec</text>
<text x="636.48" y="355.6" font-size="14" fill="#000000" textLength="34.2" lengthAdjust="spacingAndGlyphs" >luctus</text>
<text x="674.58" y="355.6" font-size="14" fill="#000000" textLength="19.64" lengthAdjust="spacingAndGlyphs" >nisl</text>
<text x="698.13" y="355.6" font-size="14" fill="#000000" textLength="42.21" lengthAdjust="spacingAndGlyphs" >blandit.</text>
<text x="744.25" y="355.6" font-size="14" fill="#000000" textLength="40.75" lengthAdjust="spacingAndGlyphs" >Integer</text>
<text x="142.3" y="374.9" font-size="14" fill="#000000" textLength="37.26" lengthAdjust="spacingAndGlyphs" >lacinia</text>
<text x="183.21" y="374.9" font-size="14" fill="#000000" textLength="25.58" lengthAdjust="spacingAndGlyphs" >ante</text>
<text x="212.44" y="374.9" font-size="14" fill="#000000" textLength="13.88" lengthAdjust="spacingAndGlyphs" >ac</text>
<text x="229.97" y="374.9" font-size="14" fill="#000000" textLength="32.14" lengthAdjust="spacingAndGlyphs" >libero</text>
<text x="265.77" y="374.9" font-size="14" fill="#000000" textLength="42.37" lengthAdjust="spacingAndGlyphs" >lobortis</text>
<text x="311.79" y="374.9" font-size="14" fill="#000000" textLength="57.71" lengthAdjust="spacingAndGlyphs" >imperdiet.</text>
<text x="373.15" y="374.9" font-size="14" fill="#000000" textLength="40.9" lengthAdjust="spacingAndGlyphs" >Nullam</text>
<text x="417.7" y="374.9" font-size="14" fill="#000000" textLength="33.59" lengthAdjust="spacingAndGlyphs" >mollis</text>
<text x="454.94" y="374.9" font-size="14" fill="#000000" textLength="50.4" lengthAdjust="spacingAndGlyphs" >convallis</text>
<text x="508.99" y="374.9" font-size="14" fill="#000000" textLength="38.71" lengthAdjust="spacingAndGlyphs" >ipsum,</text>
<text x="142.3" y="394.2" font-size="14" fill="#000000" textLength="13.83" lengthAdjust="spacingAndGlyphs" >ac</text>
<text x="159.49" y="394.2" font-size="14" fill="#000000" textLength="59.66" lengthAdjust="spacingAndGlyphs" >accumsan</text>
<text x="222.52" y="394.2" font-size="14" fill="#000000" textLength="28.39" lengthAdjust="spacingAndGlyphs" >nunc</text>
<text x="254.28" y="394.2" font-size="14" fill="#000000" textLength="48.03" lengthAdjust="spacingAndGlyphs" >vehicula</text>
<text x="305.67" y="394.2" font-size="14" fill="#000000" textLength="31.29" lengthAdjust="spacingAndGlyphs" >vitae.</text>
<text x="340.33" y="394.2" font-size="14" fill="#000000" textLength="29.83" lengthAdjust="spacingAndGlyphs" >Nulla</text>
<text x="373.53" y="394.2" font-size="14" fill="#000000" textLength="25.48" lengthAdjust="spacingAndGlyphs" >eget</text>
<text x="402.37" y="394.2" font-size="14" fill="#000000" textLength="27.65" lengthAdjust="spacingAndGlyphs" >justo</text>
<text x="433.39" y="394.2" font-size="14" fill="#000000" textLength="10.19" lengthAdjust="spacingAndGlyphs" >in</text>
<text x="446.95" y="394.2" font-size="14" fill="#000000" textLength="23.28" lengthAdjust="spacingAndGlyphs" >felis</text>
<text x="473.6" y="394.2" font-size="14" fill="#000000" textLength="45.83" lengthAdjust="spacingAndGlyphs" >tristique</text>
<text x="522.8" y="394.2" font-size="14" fill="#000000" textLength="45.11" lengthAdjust="spacingAndGlyphs" >fringilla.</text>
<text x="571.28" y="394.2" font-size="14" fill="#000000" textLength="32.73" lengthAdjust="spacingAndGlyphs" >Morbi</text>
<text x="607.38" y="394.2" font-size="14" fill="#000000" textLength="13.09" lengthAdjust="spacingAndGlyphs" >sit</text>
<text x="623.84" y="394.2" font-size="14" fill="#000000" textLength="29.1" lengthAdjust="spacingAndGlyphs" >amet</text>
<text x="656.31" y="394.2" font-size="14" fill="#000000" textLength="30.55" lengthAdjust="spacingAndGlyphs" >tortor</text>
<text x="690.23" y="394.2" font-size="14" fill="#000000" textLength="24.01" lengthAdjust="spacingAndGlyphs" >quis</text>
<text x="717.61" y="394.2" font-size="14" fill="#000000" textLength="27.64" lengthAdjust="spacingAndGlyphs" >risus</text>
<text x="748.62" y="394.2" font-size="14" fill="#000000" textLength="36.38" lengthAdjust="spacingAndGlyphs" >auctor</text>
<text x="142.3" y="413.5" font-size="14" fill="#000000" textLength="82.08" lengthAdjust="spacingAndGlyphs" >condimentum.</text>
<text x="228.01" y="413.5" font-size="14" fill="#000000" textLength="32.68" lengthAdjust="spacingAndGlyphs" >Morbi</text>
<text x="264.31" y="413.5" font-size="14" fill="#000000" textLength="10.17" lengthAdjust="spacingAndGlyphs" >in</text>
<text x="278.11" y="413.5" font-size="14" fill="#000000" textLength="68.27" lengthAdjust="spacingAndGlyphs" >ullamcorper</text>
<text x="350.01" y="413.5" font-size="14" fill="#000000" textLength="20.34" lengthAdjust="spacingAndGlyphs" >elit.</text>
<text x="373.98" y="413.5" font-size="14" fill="#000000" textLength="29.78" lengthAdjust="spacingAndGlyphs" >Nulla</text>
<text x="407.39" y="413.5" font-size="14" fill="#000000" textLength="36.31" lengthAdjust="spacingAndGlyphs" >iaculis</text>
<text x="447.33" y="413.5" font-size="14" fill="#000000" textLength="30.51" lengthAdjust="spacingAndGlyphs" >tellus</text>
<text x="481.47" y="413.5" font-size="14" fill="#000000" textLength="13.07" lengthAdjust="spacingAndGlyphs" >sit</text>
<text x="498.17" y="413.5" font-size="14" fill="#000000" textLength="29.05" lengthAdjust="spacingAndGlyphs" >amet</text>
<text x="530.85" y="413.5" font-size="14" fill="#000000" textLength="39.21" lengthAdjust="spacingAndGlyphs" >mauris</text>
<text x="573.69" y="413.5" font-size="14" fill="#000000" textLength="42.85" lengthAdjust="spacingAndGlyphs" >tempus</text>
<text x="620.17" y="413.5" font-size="14" fill="#000000" textLength="45.03" lengthAdjust="spacingAndGlyphs" >fringilla.</text>
<text x="142.3" y="447.7" font-size="14" fill="#000000" textLength="59.69" lengthAdjust="spacingAndGlyphs" >Maecenas</text>
<text x="205.58" y="447.7" font-size="14" fill="#000000" textLength="38.82" lengthAdjust="spacingAndGlyphs" >mauris</text>
<text x="247.99" y="447.7" font-size="14" fill="#000000" textLength="37.39" lengthAdjust="spacingAndGlyphs" >lectus,</text>
<text x="288.97" y="447.7" font-size="14" fill="#000000" textLength="41.7" lengthAdjust="spacingAndGlyphs" >lobortis</text>
<text x="334.27" y="447.7" font-size="14" fill="#000000" textLength="10.79" lengthAdjust="spacingAndGlyphs" >et</text>
<text x="348.65" y="447.7" font-size="14" fill="#000000" textLength="32.36" lengthAdjust="spacingAndGlyphs" >purus</text>
<text x="384.61" y="447.7" font-size="14" fill="#000000" textLength="38.1" lengthAdjust="spacingAndGlyphs" >mattis,</text>
<text x="426.3" y="447.7" font-size="14" fill="#000000" textLength="38.12" lengthAdjust="spacingAndGlyphs" >blandit</text>
<text x="468.01" y="447.7" font-size="14" fill="#000000" textLength="38.1" lengthAdjust="spacingAndGlyphs" >dictum</text>
<text x="509.71" y="447.7" font-size="14" fill="#000000" textLength="33.79" lengthAdjust="spacingAndGlyphs" >tellus.</text>
<text x="191.4" y="484.7" font-size="14" fill="#000000" textLength="57.84" lengthAdjust="spacingAndGlyphs" font-weight="bold" >Maecenas</text>
<text x="252.6" y="484.7" font-size="14" fill="#000000" textLength="22.17" lengthAdjust="spacingAndGlyphs" font-weight="bold" >non</text>
<text x="278.13" y="484.7" font-size="14" fill="#000000" textLength="32.95" lengthAdjust="spacingAndGlyphs" font-weight="bold" >lorem</text>
<text x="314.44" y="484.7" font-size="14" fill="#000000" textLength="24.87" lengthAdjust="spacingAndGlyphs" font-weight="bold" >quis</text>
<text x="342.67" y="484.7" font-size="14" fill="#000000" textLength="31.6" lengthAdjust="spacingAndGlyphs" font-weight="bold" >tellus</text>
<text x="377.63" y="484.7" font-size="14" fill="#000000" textLength="46.4" lengthAdjust="spacingAndGlyphs" font-weight="bold" >placerat</text>
<text x="427.39" y="484.7" font-size="14" fill="#000000" textLength="39.01" lengthAdjust="spacingAndGlyphs" font-weight="bold" >varius.</text>
<text x="191.4" y="522.5" font-size="14" fill="#000000" textLength="30.02" lengthAdjust="spacingAndGlyphs" >Nulla</text>
<text x="225.08" y="522.5" font-size="14" fill="#000000" textLength="39.52" lengthAdjust="spacingAndGlyphs" >facilisi.</text>
<circle cx="169.5" cy="480.6" r="1.7" fill="#000"/>
<circle cx="169.5" cy="518.4" r="1.7" fill="#000"/>
<path d="M555.5,367.0 V372.5 H549.0999999999999 M551.5,370.2 L548.9,372.5 L551.5,374.8" fill="none" stroke="#9a9a9a" stroke-width="1" />
<path d="M673.4000000000001,405.59999999999997 V411.09999999999997 H667.0 M669.4000000000001,408.79999999999995 L666.8000000000001,411.09999999999997 L669.4000000000001,413.4" fill="none" stroke="#9a9a9a" stroke-width="1" />
<path d="M551.4000000000001,439.7 V445.2 H545.0 M547.4000000000001,442.9 L544.8000000000001,445.2 L547.4000000000001,447.5" fill="none" stroke="#9a9a9a" stroke-width="1" />
<path d="M477.4,476.7 V482.2 H471.0 M473.4,479.9 L470.8,482.2 L473.4,484.5" fill="none" stroke="#9a9a9a" stroke-width="1" />
<path d="M277.0,514.7 V520.2 H270.6 M273.0,517.9 L270.40000000000003,520.2 L273.0,522.5" fill="none" stroke="#9a9a9a" stroke-width="1" />
<rect x="1" y="544" width="942" height="22" fill="#f3f3f3" />
<line x1="1" y1="544.5" x2="943" y2="544.5" stroke="#d0d0d0" stroke-width="1" />
<line x1="0" y1="566.5" x2="944" y2="566.5" stroke="#2b579a" stroke-width="1" />
<path d="M0,559 V567 H8 A8,8 0 0 1 0,559 Z" fill="#dfe5ee" />
<path d="M944,559 V567 H936 A8,8 0 0 0 944,559 Z" fill="#dfe5ee" />
<path d="M0.5,559 A7.5,7.5 0 0 0 8,566.5 M943.5,559 A7.5,7.5 0 0 1 936,566.5" fill="none" stroke="#2b579a" stroke-width="1" />
<text x="13.2" y="558.5" font-size="11" fill="#333333" textLength="56.8" lengthAdjust="spacingAndGlyphs" >Page 1 of 4</text>
<text x="89.5" y="558.5" font-size="11" fill="#333333" textLength="81" lengthAdjust="spacingAndGlyphs" >16 of 928 words</text>
<text x="221.7" y="558.5" font-size="11" fill="#333333" textLength="116" lengthAdjust="spacingAndGlyphs" >English (United States)</text>
<text x="447" y="558.5" font-size="11" fill="#333333" textLength="126.4" lengthAdjust="spacingAndGlyphs" >Accessibility: Unavailable</text>
<text x="897.8" y="558.5" font-size="11" fill="#333333" textLength="26.6" lengthAdjust="spacingAndGlyphs" >100%</text>
<rect x="672" y="545" width="39.5" height="21" fill="#c6c6c6" />
<line x1="758" y1="555.5" x2="765" y2="555.5" stroke="#444" stroke-width="1.2" />
<line x1="771.4" y1="555.5" x2="871.2" y2="555.5" stroke="#777" stroke-width="1" />
<rect x="819" y="550.5" width="4.6" height="9.5" fill="#444" />
<path d="M875.5,555.5 H883.5 M879.5,551.5 V559.5" fill="none" stroke="#444" stroke-width="1.2" />
<path d="M190.6,548.5 H196.6 V558.5 H190.6 Z" fill="none" stroke="#5a5a5a" stroke-width="1.1" />
<path d="M196.6,548.5 H202.6 M196.6,558.5 H202.6" fill="none" stroke="#5a5a5a" stroke-width="1.1" />
<path d="M196.6,558.5 V560.8 M195.3,559.6 L196.6,560.9 L197.9,559.6" fill="none" stroke="#5a5a5a" stroke-width="1" />
<path d="M198.8,551.5 L202.3,556 M202.3,551.5 L198.8,556" fill="none" stroke="#5a5a5a" stroke-width="1.4" />
<circle cx="434" cy="555" r="5.4" fill="none" stroke="#555" stroke-width="1.2" stroke-dasharray="2.8 1.8" transform="rotate(-60 434 555)"/>
<path d="M434.6,547.6 V553.4 M432.6,551.4 L434.6,553.4 L436.6,551.4" fill="none" stroke="#444" stroke-width="1.1" />
<text x="437.8" y="562.2" font-size="12" fill="#3a3a3a" font-weight="bold" >?</text>
<path d="M651.5,548.5 H645.5 V559.5 H650.5 L651.5,561 L652.5,559.5 H657.5 V548.5 Z" fill="none" stroke="#5a5a5a" stroke-width="1.1" />
<line x1="651.5" y1="548.5" x2="651.5" y2="560.5" stroke="#5a5a5a" stroke-width="1.1" />
<line x1="646.5" y1="550.5" x2="656.5" y2="550.5" stroke="#5a5a5a" stroke-width="1" />
<line x1="646.5" y1="552.5" x2="656.5" y2="552.5" stroke="#5a5a5a" stroke-width="1" />
<line x1="646.5" y1="554.5" x2="656.5" y2="554.5" stroke="#5a5a5a" stroke-width="1" />
<line x1="646.5" y1="556.5" x2="656.5" y2="556.5" stroke="#5a5a5a" stroke-width="1" />
<rect x="685.5" y="548.5" width="13" height="12" fill="none" stroke="#5a5a5a" stroke-width="1.1" />
<line x1="687" y1="550.5" x2="697" y2="550.5" stroke="#5a5a5a" stroke-width="1" />
<line x1="687" y1="552.5" x2="697" y2="552.5" stroke="#5a5a5a" stroke-width="1" />
<line x1="687" y1="554.5" x2="697" y2="554.5" stroke="#5a5a5a" stroke-width="1" />
<line x1="687" y1="556.5" x2="697" y2="556.5" stroke="#5a5a5a" stroke-width="1" />
<line x1="687" y1="558.5" x2="697" y2="558.5" stroke="#5a5a5a" stroke-width="1" />
<path d="M730.5,560.5 H725.5 V548.5 H738.5 V553.5" fill="none" stroke="#5a5a5a" stroke-width="1.1" />
<line x1="727" y1="550.5" x2="736" y2="550.5" stroke="#5a5a5a" stroke-width="1" />
<line x1="727" y1="552.5" x2="733" y2="552.5" stroke="#5a5a5a" stroke-width="1" />
<line x1="727" y1="554.5" x2="731" y2="554.5" stroke="#5a5a5a" stroke-width="1" />
<line x1="727" y1="556.5" x2="730.5" y2="556.5" stroke="#5a5a5a" stroke-width="1" />
<circle cx="735.2" cy="557.2" r="4.2" fill="#5a5a5a" stroke="#f3f3f3" stroke-width="1"/>
<path d="M732.4,555.4 Q734,556.8 735.6,555.6 Q736.4,557.6 738,558 M734.4,560.6 L735.6,558.2" fill="none" stroke="#f3f3f3" stroke-width="0.9" />
<defs><filter id="sh" x="-10%" y="-10%" width="130%" height="130%"><feGaussianBlur stdDeviation="3"/></filter></defs>
<rect x="168" y="141" width="174" height="312" fill="rgba(0,0,0,0.18)" rx="4" filter="url(#sh)"/>
<rect x="166.5" y="137.5" width="173" height="311" fill="#ffffff" stroke="#8a8a8a" stroke-width="1" rx="4" />
<rect x="174.5" y="148.5" width="12" height="12" fill="#ffffff" stroke="#7a7a7a" stroke-width="1" />
<text x="192.4" y="160" font-size="12" fill="#262626" textLength="99.3" lengthAdjust="spacingAndGlyphs" >High-contrast only</text>
<line x1="168" y1="171.5" x2="338" y2="171.5" stroke="#e1e1e1" stroke-width="1" />
<rect x="181" y="180" width="14" height="14" fill="#000000" />
<text x="204.3" y="192.1" font-size="12" fill="#666666" textLength="55" lengthAdjust="spacingAndGlyphs" >Automatic</text>
<line x1="204.3" y1="194.5" x2="213" y2="194.5" stroke="#666666" stroke-width="1" />
<line x1="168" y1="202.5" x2="338" y2="202.5" stroke="#e1e1e1" stroke-width="1" />
<text x="180.4" y="223.5" font-size="12" fill="#333333" textLength="75.6" lengthAdjust="spacingAndGlyphs" font-weight="bold" >Theme Colors</text>
<rect x="170.6" y="236.5" width="12.4" height="12" fill="#FFFFFF" stroke="#e8e8e8" stroke-width="1" />
<rect x="170.79999999999998" y="262.6" width="12" height="12.7" fill="#F2F2F2" />
<rect x="170.79999999999998" y="275.20000000000005" width="12" height="12.7" fill="#D9D9D9" />
<rect x="170.79999999999998" y="287.8" width="12" height="12.7" fill="#BFBFBF" />
<rect x="170.79999999999998" y="300.40000000000003" width="12" height="12.7" fill="#A6A6A6" />
<rect x="170.79999999999998" y="313.0" width="12" height="12.7" fill="#808080" />
<rect x="187.85" y="236.5" width="12" height="11.8" fill="#000000" />
<rect x="187.85" y="262.6" width="12" height="12.7" fill="#808080" />
<rect x="187.85" y="275.20000000000005" width="12" height="12.7" fill="#595959" />
<rect x="187.85" y="287.8" width="12" height="12.7" fill="#404040" />
<rect x="187.85" y="300.40000000000003" width="12" height="12.7" fill="#262626" />
<rect x="187.85" y="313.0" width="12" height="12.7" fill="#0D0D0D" />
<rect x="204.89999999999998" y="236.5" width="12" height="11.8" fill="#E7E6E6" />
<rect x="204.89999999999998" y="262.6" width="12" height="12.7" fill="#D0CECE" />
<rect x="204.89999999999998" y="275.20000000000005" width="12" height="12.7" fill="#AEABAB" />
<rect x="204.89999999999998" y="287.8" width="12" height="12.7" fill="#757070" />
<rect x="204.89999999999998" y="300.40000000000003" width="12" height="12.7" fill="#3A3838" />
<rect x="204.89999999999998" y="313.0" width="12" height="12.7" fill="#161616" />
<rect x="221.95" y="236.5" width="12" height="11.8" fill="#44546A" />
<rect x="221.95" y="262.6" width="12" height="12.7" fill="#D6DCE5" />
<rect x="221.95" y="275.20000000000005" width="12" height="12.7" fill="#ADB9CA" />
<rect x="221.95" y="287.8" width="12" height="12.7" fill="#8497B0" />
<rect x="221.95" y="300.40000000000003" width="12" height="12.7" fill="#333F50" />
<rect x="221.95" y="313.0" width="12" height="12.7" fill="#222A35" />
<rect x="239.0" y="236.5" width="12" height="11.8" fill="#4472C4" />
<rect x="239.0" y="262.6" width="12" height="12.7" fill="#DAE3F3" />
<rect x="239.0" y="275.20000000000005" width="12" height="12.7" fill="#B4C7E7" />
<rect x="239.0" y="287.8" width="12" height="12.7" fill="#8FAADC" />
<rect x="239.0" y="300.40000000000003" width="12" height="12.7" fill="#2F5597" />
<rect x="239.0" y="313.0" width="12" height="12.7" fill="#203864" />
<rect x="256.05" y="236.5" width="12" height="11.8" fill="#ED7D31" />
<rect x="256.05" y="262.6" width="12" height="12.7" fill="#FBE5D6" />
<rect x="256.05" y="275.20000000000005" width="12" height="12.7" fill="#F8CBAD" />
<rect x="256.05" y="287.8" width="12" height="12.7" fill="#F4B183" />
<rect x="256.05" y="300.40000000000003" width="12" height="12.7" fill="#C55A11" />
<rect x="256.05" y="313.0" width="12" height="12.7" fill="#843C0C" />
<rect x="273.09999999999997" y="236.5" width="12" height="11.8" fill="#A5A5A5" />
<rect x="273.09999999999997" y="262.6" width="12" height="12.7" fill="#EDEDED" />
<rect x="273.09999999999997" y="275.20000000000005" width="12" height="12.7" fill="#DBDBDB" />
<rect x="273.09999999999997" y="287.8" width="12" height="12.7" fill="#C9C9C9" />
<rect x="273.09999999999997" y="300.40000000000003" width="12" height="12.7" fill="#7B7B7B" />
<rect x="273.09999999999997" y="313.0" width="12" height="12.7" fill="#525252" />
<rect x="290.15" y="236.5" width="12" height="11.8" fill="#FFC000" />
<rect x="290.15" y="262.6" width="12" height="12.7" fill="#FFF2CC" />
<rect x="290.15" y="275.20000000000005" width="12" height="12.7" fill="#FFE699" />
<rect x="290.15" y="287.8" width="12" height="12.7" fill="#FFD966" />
<rect x="290.15" y="300.40000000000003" width="12" height="12.7" fill="#BF9000" />
<rect x="290.15" y="313.0" width="12" height="12.7" fill="#7F6000" />
<rect x="307.2" y="236.5" width="12" height="11.8" fill="#5B9BD5" />
<rect x="307.2" y="262.6" width="12" height="12.7" fill="#DEEBF7" />
<rect x="307.2" y="275.20000000000005" width="12" height="12.7" fill="#BDD7EE" />
<rect x="307.2" y="287.8" width="12" height="12.7" fill="#9DC3E6" />
<rect x="307.2" y="300.40000000000003" width="12" height="12.7" fill="#2E75B6" />
<rect x="307.2" y="313.0" width="12" height="12.7" fill="#1F4E79" />
<rect x="324.25" y="236.5" width="12" height="11.8" fill="#70AD47" />
<rect x="324.25" y="262.6" width="12" height="12.7" fill="#E2F0D9" />
<rect x="324.25" y="275.20000000000005" width="12" height="12.7" fill="#C5E0B4" />
<rect x="324.25" y="287.8" width="12" height="12.7" fill="#A9D18E" />
<rect x="324.25" y="300.40000000000003" width="12" height="12.7" fill="#548235" />
<rect x="324.25" y="313.0" width="12" height="12.7" fill="#385723" />
<line x1="168" y1="339.5" x2="338" y2="339.5" stroke="#e1e1e1" stroke-width="1" />
<text x="180" y="360.7" font-size="12" fill="#333333" textLength="87" lengthAdjust="spacingAndGlyphs" font-weight="bold" >Standard Colors</text>
<rect x="170.9" y="374" width="11.2" height="10.8" fill="#C00000" />
<rect x="187.45000000000002" y="373.5" width="12.2" height="12" fill="#fde5c8" stroke="#e8a060" stroke-width="1" />
<rect x="188.85000000000002" y="375" width="9.4" height="9.2" fill="#FF0000" />
<rect x="205.0" y="374" width="11.2" height="10.8" fill="#FFC000" />
<rect x="222.05" y="374" width="11.2" height="10.8" fill="#FFFF00" />
<rect x="239.10000000000002" y="374" width="11.2" height="10.8" fill="#92D050" />
<rect x="256.15" y="374" width="11.2" height="10.8" fill="#00B050" />
<rect x="273.20000000000005" y="374" width="11.2" height="10.8" fill="#00B0F0" />
<rect x="290.25" y="374" width="11.2" height="10.8" fill="#0070C0" />
<rect x="307.3" y="374" width="11.2" height="10.8" fill="#002060" />
<rect x="324.35" y="374" width="11.2" height="10.8" fill="#7030A0" />
<line x1="168" y1="397.5" x2="338" y2="397.5" stroke="#e1e1e1" stroke-width="1" />
<g transform="translate(179.3,410.5)">
<path d="M0,0 L0.00,-7.50 A7.5,7.5 0 0 1 7.13,-2.32 Z" fill="#e7c08a" stroke="#fff" stroke-width="0.8"/>
<path d="M0,0 L7.13,-2.32 A7.5,7.5 0 0 1 4.41,6.07 Z" fill="#6f9f98" stroke="#fff" stroke-width="0.8"/>
<path d="M0,0 L4.41,6.07 A7.5,7.5 0 0 1 -4.41,6.07 Z" fill="#4f7fb8" stroke="#fff" stroke-width="0.8"/>
<path d="M0,0 L-4.41,6.07 A7.5,7.5 0 0 1 -7.13,-2.32 Z" fill="#c0604a" stroke="#fff" stroke-width="0.8"/>
<path d="M0,0 L-7.13,-2.32 A7.5,7.5 0 0 1 -0.00,-7.50 Z" fill="#d49060" stroke="#fff" stroke-width="0.8"/>
</g>
<text x="192.7" y="412" font-size="12" fill="#262626" textLength="73" lengthAdjust="spacingAndGlyphs" >More Colors...</text>
<line x1="192.7" y1="413.5" x2="203" y2="413.5" stroke="#262626" stroke-width="1" />
<defs><linearGradient id="gr" x1="0" y1="0" x2="1" y2="1"><stop offset="0" stop-color="#ffffff"/><stop offset="1" stop-color="#8a8a8a"/></linearGradient></defs>
<rect x="173.5" y="428.5" width="13" height="13" fill="url(#gr)" stroke="#6a6a6a" stroke-width="1" />
<text x="192.7" y="436" font-size="12" fill="#262626" textLength="44.5" lengthAdjust="spacingAndGlyphs" >Gradient</text>
<line x1="192.7" y1="437.5" x2="200" y2="437.5" stroke="#262626" stroke-width="1" />
<path d="M325.5,431 L329,434.5 L325.5,438 Z" fill="#333" />
</svg>
</body></html>
